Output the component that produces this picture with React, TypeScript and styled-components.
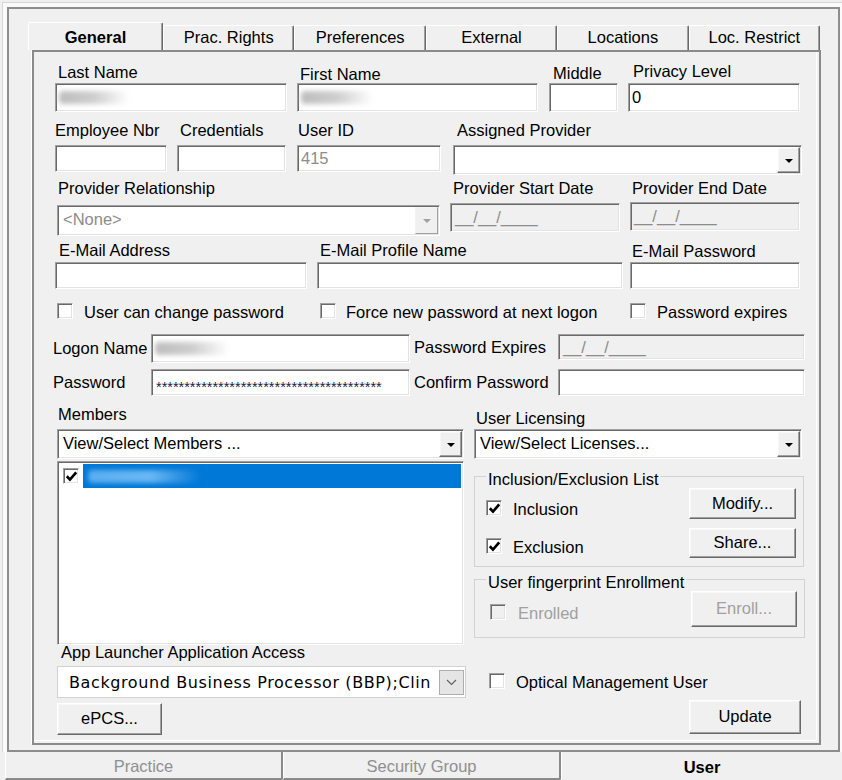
import React from "react";
import styled, { createGlobalStyle, css } from "styled-components";

const GlobalStyle = createGlobalStyle`
  html, body { margin: 0; padding: 0; background: #f0f0f0; }
  * { box-sizing: border-box; }
  body {
    font-family: "Liberation Sans", Arial, Helvetica, sans-serif;
    font-size: 16.5px;
    color: #000;
  }
`;

const sunken = css`
  border: 1px solid;
  border-color: #a0a0a0 #ffffff #ffffff #a0a0a0;
  box-shadow: inset 1px 1px 0 #696969, inset -1px -1px 0 #e3e3e3;
`;

const raised = css`
  border: 1px solid;
  border-color: #ffffff #696969 #696969 #ffffff;
  box-shadow: inset -1px -1px 0 #a0a0a0, inset 1px 1px 0 #f8f8f8;
`;

const Window = styled.div`
  width: 842px;
  height: 780px;
  overflow: hidden;
  background: #f0f0f0;
  display: flex;
  flex-direction: column;
`;

const OuterEdge = styled.div`
  margin: 2px 0 0 2px;
  height: 750px;
  width: 840px;
  border-top: 1px solid #d6d6d6;
  border-left: 1px solid #d6d6d6;
  background: #fbfbfb;
  padding: 4px 0 0 4px;
`;

const Frame = styled.div`
  width: 833px;
  height: 745px;
  border: 2px solid #8d8d8d;
  background: #f0f0f0;
  padding: 13px 0 0 19px;
`;

const TabStrip = styled.div`
  display: flex;
  align-items: flex-end;
  width: 792px;
  height: 28px;
`;

const Tab = styled.div<{ $active?: boolean }>`
  flex: ${(p) => (p.$active ? "0 0 135px" : "1 1 0")};
  height: ${(p) => (p.$active ? 28 : 25)}px;
  background: #f0f0f0;
  border-top: 1px solid #ffffff;
  border-left: 1px solid #ffffff;
  border-right: 1px solid #696969;
  box-shadow: inset -1px 0 0 #a0a0a0;
  border-radius: 2px 2px 0 0;
  display: flex;
  align-items: flex-end;
  justify-content: center;
  padding-bottom: 4px;
  line-height: 18px;
  font-weight: ${(p) => (p.$active ? 700 : 400)};
  white-space: nowrap;
`;

const Panel = styled.div`
  margin-left: 4px;
  width: 789px;
  height: 695px;
  border: 2px solid #8a8a8a;
  box-shadow: -1px -1px 0 #ffffff, inset -2px -2px 0 #f0f0f0, inset -3px -3px 0 #ffffff;
  padding: 11px 14px 0 21px;
  display: flex;
  flex-direction: column;
`;

const Row = styled.div<{ $mt?: number }>`
  display: flex;
  align-items: flex-start;
  margin-top: ${(p) => p.$mt ?? 0}px;
`;

const Field = styled.div<{ $w: number; $ml?: number }>`
  display: flex;
  flex-direction: column;
  flex: none;
  width: ${(p) => p.$w}px;
  margin-left: ${(p) => p.$ml ?? 0}px;
`;

const FieldLabel = styled.span<{ $x: number; $dy: number; $mb: number }>`
  display: block;
  height: 18px;
  line-height: 18px;
  white-space: nowrap;
  padding-left: ${(p) => p.$x}px;
  margin-top: ${(p) => p.$dy}px;
  margin-bottom: ${(p) => p.$mb}px;
`;

const InlineLabel = styled.span<{ $w: number; $h: number; $ml?: number; $x?: number }>`
  flex: none;
  width: ${(p) => p.$w}px;
  height: ${(p) => p.$h}px;
  line-height: ${(p) => p.$h}px;
  margin-left: ${(p) => p.$ml ?? 0}px;
  padding-left: ${(p) => p.$x ?? 0}px;
  white-space: nowrap;
`;

const TextBox = styled.div<{ $h: number; $w?: number; $disabled?: boolean; $muted?: boolean; $px?: number }>`
  ${sunken};
  flex: none;
  height: ${(p) => p.$h}px;
  width: ${(p) => (p.$w ? `${p.$w}px` : "100%")};
  background: ${(p) => (p.$disabled ? "#f0f0f0" : "#ffffff")};
  color: ${(p) => (p.$muted ? "#8c8c8c" : "#000000")};
  padding-left: ${(p) => p.$px ?? 3}px;
  display: flex;
  align-items: center;
  white-space: nowrap;
  overflow: hidden;
`;

const Combo = styled.div<{ $h: number; $w?: number }>`
  ${sunken};
  flex: none;
  height: ${(p) => p.$h}px;
  width: ${(p) => (p.$w ? `${p.$w}px` : "100%")};
  background: #ffffff;
  display: flex;
  align-items: stretch;
  padding: 1px;
`;

const ComboText = styled.span<{ $muted?: boolean }>`
  flex: 1;
  display: flex;
  align-items: center;
  padding: 0 0 2px 4px;
  color: ${(p) => (p.$muted ? "#8c8c8c" : "#000000")};
  white-space: nowrap;
  overflow: hidden;
`;

const DropBtn = styled.span<{ $disabled?: boolean }>`
  flex: none;
  width: 23px;
  background: #f0f0f0;
  ${raised};
  ${(p) =>
    p.$disabled &&
    css`
      border-color: #f4f4f4 #a0a0a0 #a0a0a0 #f4f4f4;
      box-shadow: none;
    `}
  display: flex;
  align-items: center;
  justify-content: center;
  padding-top: 1px;
`;

const Arrow = styled.span<{ $disabled?: boolean }>`
  width: 0;
  height: 0;
  border-left: 4px solid transparent;
  border-right: 4px solid transparent;
  border-top: 4px solid ${(p) => (p.$disabled ? "#a0a0a0" : "#000000")};
`;

const Redact = styled.span<{ $w: number; $tone: "gray" | "blue" }>`
  display: inline-block;
  width: ${(p) => p.$w}px;
  height: 13px;
  border-radius: 4px;
  background: ${(p) =>
    p.$tone === "blue"
      ? "linear-gradient(90deg, #5aaef0 0%, #6ab8f2 55%, rgba(106,184,242,0) 100%)"
      : "linear-gradient(90deg, #bdbdbd 0%, #cecece 50%, rgba(230,230,230,0) 100%)"};
  filter: blur(2.5px);
`;

const PasswordText = styled.span`
  font-size: 14.5px;
  margin-top: 9px;
  color: #222244;
`;

const CheckBoxBox = styled.span<{ $disabled?: boolean }>`
  ${sunken};
  flex: none;
  width: 16px;
  height: 16px;
  background: ${(p) => (p.$disabled ? "#f0f0f0" : "#ffffff")};
  display: inline-flex;
  align-items: center;
  justify-content: center;
`;

const CheckItem = styled.div<{ $w?: number; $ml?: number; $mt?: number; $gap: number; $disabled?: boolean }>`
  display: flex;
  align-items: center;
  flex: none;
  gap: ${(p) => p.$gap}px;
  width: ${(p) => (p.$w ? `${p.$w}px` : "auto")};
  margin-left: ${(p) => p.$ml ?? 0}px;
  margin-top: ${(p) => p.$mt ?? 0}px;
  height: 16px;
  line-height: 18px;
  white-space: nowrap;
  color: ${(p) => (p.$disabled ? "#a0a0a0" : "#000000")};
  & > span:last-child {
    padding-top: 1px;
  }
`;

const Button = styled.button<{ $w: number; $h: number; $ml?: number; $mt?: number; $disabled?: boolean }>`
  ${raised};
  flex: none;
  font: inherit;
  width: ${(p) => p.$w}px;
  height: ${(p) => p.$h}px;
  margin: ${(p) => p.$mt ?? 0}px 0 0 ${(p) => p.$ml ?? 0}px;
  padding: 0 0 2px 0;
  background: #f0f0f0;
  color: ${(p) => (p.$disabled ? "#a0a0a0" : "#000000")};
  line-height: 18px;
  text-align: center;
`;

const BottomArea = styled.div`
  display: flex;
  align-items: flex-start;
  margin-top: 9px;
`;

const Column = styled.div<{ $w: number; $ml: number }>`
  display: flex;
  flex-direction: column;
  flex: none;
  width: ${(p) => p.$w}px;
  margin-left: ${(p) => p.$ml}px;
`;

const ListBox = styled.div`
  ${sunken};
  margin-top: 2px;
  height: 184px;
  width: 407px;
  background: #ffffff;
  padding: 2px;
`;

const ListRow = styled.div`
  display: flex;
  align-items: center;
  height: 24px;
  padding-left: 3px;
  gap: 4px;
`;

const ListSelection = styled.div`
  flex: 1;
  height: 24px;
  background: #0078d7;
  display: flex;
  align-items: center;
  padding-left: 5px;
`;

const AppCombo = styled.div`
  margin-top: 5px;
  width: 409px;
  height: 32px;
  border: 1px solid #d2d2d2;
  background: #ffffff;
  display: flex;
  align-items: center;
  padding: 0 1px 0 11px;
`;

const AppComboText = styled.span`
  flex: 1;
  font-family: "DejaVu Sans", Verdana, sans-serif;
  font-size: 16px;
  letter-spacing: 0.6px;
  white-space: nowrap;
  padding-top: 1px;
`;

const ChevronBtn = styled.span`
  flex: none;
  width: 25px;
  height: 25px;
  background: #e5e5e5;
  border: 1px solid #adadad;
  display: flex;
  align-items: center;
  justify-content: center;
`;

const GroupBox = styled.fieldset<{ $w: number; $mt: number; $pb: number }>`
  margin: ${(p) => p.$mt}px 0 0 0;
  width: ${(p) => p.$w}px;
  min-width: 0;
  border: 1px solid #d2d2d2;
  padding: 0 7px ${(p) => p.$pb}px 11px;
`;

const Legend = styled.legend`
  padding: 6px 2px 0 2px;
  line-height: 18px;
  font-size: 16.5px;
`;

const GroupInner = styled.div`
  display: flex;
  justify-content: space-between;
  align-items: flex-start;
`;

const Stack = styled.div`
  display: flex;
  flex-direction: column;
`;

const BottomTabs = styled.div`
  display: flex;
  margin-left: 5px;
  width: 837px;
  height: 28px;
`;

const BottomTab = styled.div<{ $active?: boolean; $w?: number }>`
  flex: ${(p) => (p.$w ? `0 0 ${p.$w}px` : "1 1 0")};
  display: flex;
  align-items: center;
  justify-content: center;
  padding-top: 2px;
  border-left: 1px solid #ffffff;
  ${(p) =>
    p.$active
      ? css`
          font-weight: 700;
          color: #000000;
        `
      : css`
          color: #8f8f8f;
          border-right: 2px solid #8a8a8a;
          border-bottom: 2px solid #8a8a8a;
          border-bottom-right-radius: 2px;
        `}
`;

function Check() {
  return (
    <svg width="13" height="13" viewBox="0 0 13 13">
      <path d="M1.8 6.2 L5 9.6 L11.2 2.4" stroke="#000" strokeWidth="2.7" fill="none" />
    </svg>
  );
}

function Chevron() {
  return (
    <svg width="11" height="7" viewBox="0 0 11 7">
      <path d="M1 1 L5.5 5.5 L10 1" stroke="#606060" strokeWidth="1.1" fill="none" />
    </svg>
  );
}

type LFProps = {
  label: string;
  w: number;
  ml?: number;
  x?: number;
  dy?: number;
  ct: number;
  children: React.ReactNode;
};

function LabeledField({ label, w, ml = 0, x = 0, dy = 0, ct, children }: LFProps) {
  return (
    <Field $w={w} $ml={ml}>
      <FieldLabel $x={x} $dy={dy} $mb={ct - 18 - dy}>
        {label}
      </FieldLabel>
      {children}
    </Field>
  );
}

function DropCombo({ h, w, text, muted, disabled }: { h: number; w?: number; text?: string; muted?: boolean; disabled?: boolean }) {
  return (
    <Combo $h={h} $w={w}>
      <ComboText $muted={muted}>{text}</ComboText>
      <DropBtn $disabled={disabled}>
        <Arrow $disabled={disabled} />
      </DropBtn>
    </Combo>
  );
}

const tabs = ["General", "Prac. Rights", "Preferences", "External", "Locations", "Loc. Restrict"];

export default function App() {
  return (
    <Window>
      <GlobalStyle />
      <OuterEdge>
        <Frame>
          <TabStrip>
            {tabs.map((t, i) => (
              <Tab key={t} $active={i === 0}>
                {t}
              </Tab>
            ))}
          </TabStrip>
          <Panel>
            <Row>
              <LabeledField label="Last Name" w={232} x={3} ct={20}>
                <TextBox $h={29}>
                  <Redact $w={70} $tone="gray" />
                </TextBox>
              </LabeledField>
              <LabeledField label="First Name" w={241} ml={10} x={3} dy={2} ct={20}>
                <TextBox $h={29}>
                  <Redact $w={72} $tone="gray" />
                </TextBox>
              </LabeledField>
              <LabeledField label="Middle" w={69} ml={11} x={4} dy={1} ct={20}>
                <TextBox $h={29} />
              </LabeledField>
              <LabeledField label="Privacy Level" w={172} ml={10} x={5} dy={-1} ct={20}>
                <TextBox $h={29}>0</TextBox>
              </LabeledField>
            </Row>

            <Row $mt={9}>
              <LabeledField label="Employee Nbr" w={112} ct={24}>
                <TextBox $h={27} />
              </LabeledField>
              <LabeledField label="Credentials" w={109} ml={10} x={3} ct={24}>
                <TextBox $h={27} />
              </LabeledField>
              <LabeledField label="User ID" w={144} ml={11} x={1} ct={24}>
                <TextBox $h={27} $muted>
                  415
                </TextBox>
              </LabeledField>
              <LabeledField label="Assigned Provider" w={349} ml={12} x={4} ct={24}>
                <DropCombo h={30} />
              </LabeledField>
            </Row>

            <Row $mt={4}>
              <LabeledField label="Provider Relationship" w={383} ml={2} x={1} ct={26}>
                <DropCombo h={31} text="<None>" muted disabled />
              </LabeledField>
              <LabeledField label="Provider Start Date" w={170} ml={10} x={3} ct={24}>
                <TextBox $h={29} $disabled $muted $px={4}>
                  __/__/____
                </TextBox>
              </LabeledField>
              <LabeledField label="Provider End Date" w={170} ml={10} x={2} ct={23}>
                <TextBox $h={29} $disabled $muted $px={3}>
                  __/__/____
                </TextBox>
              </LabeledField>
            </Row>

            <Row $mt={5}>
              <LabeledField label="E-Mail Address" w={252} x={4} ct={21}>
                <TextBox $h={27} />
              </LabeledField>
              <LabeledField label="E-Mail Profile Name" w={306} ml={10} x={3} ct={21}>
                <TextBox $h={27} />
              </LabeledField>
              <LabeledField label="E-Mail Password" w={170} ml={7} x={2} dy={1} ct={21}>
                <TextBox $h={27} />
              </LabeledField>
            </Row>

            <Row $mt={14}>
              <CheckItem $w={263} $ml={2} $gap={11}>
                <CheckBoxBox />
                <span>User can change password</span>
              </CheckItem>
              <CheckItem $w={310} $gap={10}>
                <CheckBoxBox />
                <span>Force new password at next logon</span>
              </CheckItem>
              <CheckItem $gap={11}>
                <CheckBoxBox />
                <span>Password expires</span>
              </CheckItem>
            </Row>

            <Row $mt={15}>
              <InlineLabel $w={98} $h={29} $ml={-2}>
                Logon Name
              </InlineLabel>
              <TextBox $h={29} $w={259}>
                <Redact $w={74} $tone="gray" />
              </TextBox>
              <InlineLabel $w={148} $h={26} $x={4}>
                Password Expires
              </InlineLabel>
              <TextBox $h={26} $w={247} $disabled $muted $px={4}>
                __/__/____
              </TextBox>
            </Row>

            <Row $mt={6}>
              <InlineLabel $w={98} $h={27} $ml={-2}>
                Password
              </InlineLabel>
              <TextBox $h={27} $w={259} $px={4}>
                <PasswordText>{"*".repeat(40)}</PasswordText>
              </TextBox>
              <InlineLabel $w={148} $h={27} $x={4}>
                Confirm Password
              </InlineLabel>
              <TextBox $h={27} $w={247} />
            </Row>

            <BottomArea>
              <Column $w={409} $ml={2}>
                <FieldLabel $x={1} $dy={0} $mb={6}>
                  Members
                </FieldLabel>
                <DropCombo h={30} w={407} text="View/Select Members ..." />
                <ListBox>
                  <ListRow>
                    <CheckBoxBox>
                      <Check />
                    </CheckBoxBox>
                    <ListSelection>
                      <Redact $w={113} $tone="blue" />
                    </ListSelection>
                  </ListRow>
                </ListBox>
                <FieldLabel $x={4} $dy={-2} $mb={0}>
                  App Launcher Application Access
                </FieldLabel>
                <AppCombo>
                  <AppComboText>Background Business Processor (BBP);Clin</AppComboText>
                  <ChevronBtn>
                    <Chevron />
                  </ChevronBtn>
                </AppCombo>
                <Button $w={105} $h={32} $mt={5}>
                  ePCS...
                </Button>
              </Column>

              <Column $w={331} $ml={8}>
                <FieldLabel $x={2} $dy={4} $mb={2}>
                  User Licensing
                </FieldLabel>
                <DropCombo h={30} w={328} text="View/Select Licenses..." />
                <GroupBox $w={330} $mt={5} $pb={8}>
                  <Legend>Inclusion/Exclusion List</Legend>
                  <GroupInner>
                    <Stack>
                      <CheckItem $mt={12} $gap={11}>
                        <CheckBoxBox>
                          <Check />
                        </CheckBoxBox>
                        <span>Inclusion</span>
                      </CheckItem>
                      <CheckItem $mt={22} $gap={11}>
                        <CheckBoxBox>
                          <Check />
                        </CheckBoxBox>
                        <span>Exclusion</span>
                      </CheckItem>
                    </Stack>
                    <Stack>
                      <Button $w={107} $h={31}>
                        Modify...
                      </Button>
                      <Button $w={107} $h={30} $mt={9}>
                        Share...
                      </Button>
                    </Stack>
                  </GroupInner>
                </GroupBox>
                <GroupBox $w={331} $mt={0} $pb={10}>
                  <Legend>User fingerprint Enrollment</Legend>
                  <GroupInner>
                    <CheckItem $mt={13} $ml={4} $gap={12} $disabled>
                      <CheckBoxBox $disabled />
                      <span>Enrolled</span>
                    </CheckItem>
                    <Button $w={106} $h={36} $disabled>
                      Enroll...
                    </Button>
                  </GroupInner>
                </GroupBox>
                <CheckItem $mt={35} $ml={15} $gap={11}>
                  <CheckBoxBox />
                  <span>Optical Management User</span>
                </CheckItem>
                <Button $w={112} $h={34} $mt={11} $ml={215}>
                  Update
                </Button>
              </Column>
            </BottomArea>
          </Panel>
        </Frame>
      </OuterEdge>
      <BottomTabs>
        <BottomTab $w={278}>Practice</BottomTab>
        <BottomTab $w={278}>Security Group</BottomTab>
        <BottomTab $active>User</BottomTab>
      </BottomTabs>
    </Window>
  );
}
